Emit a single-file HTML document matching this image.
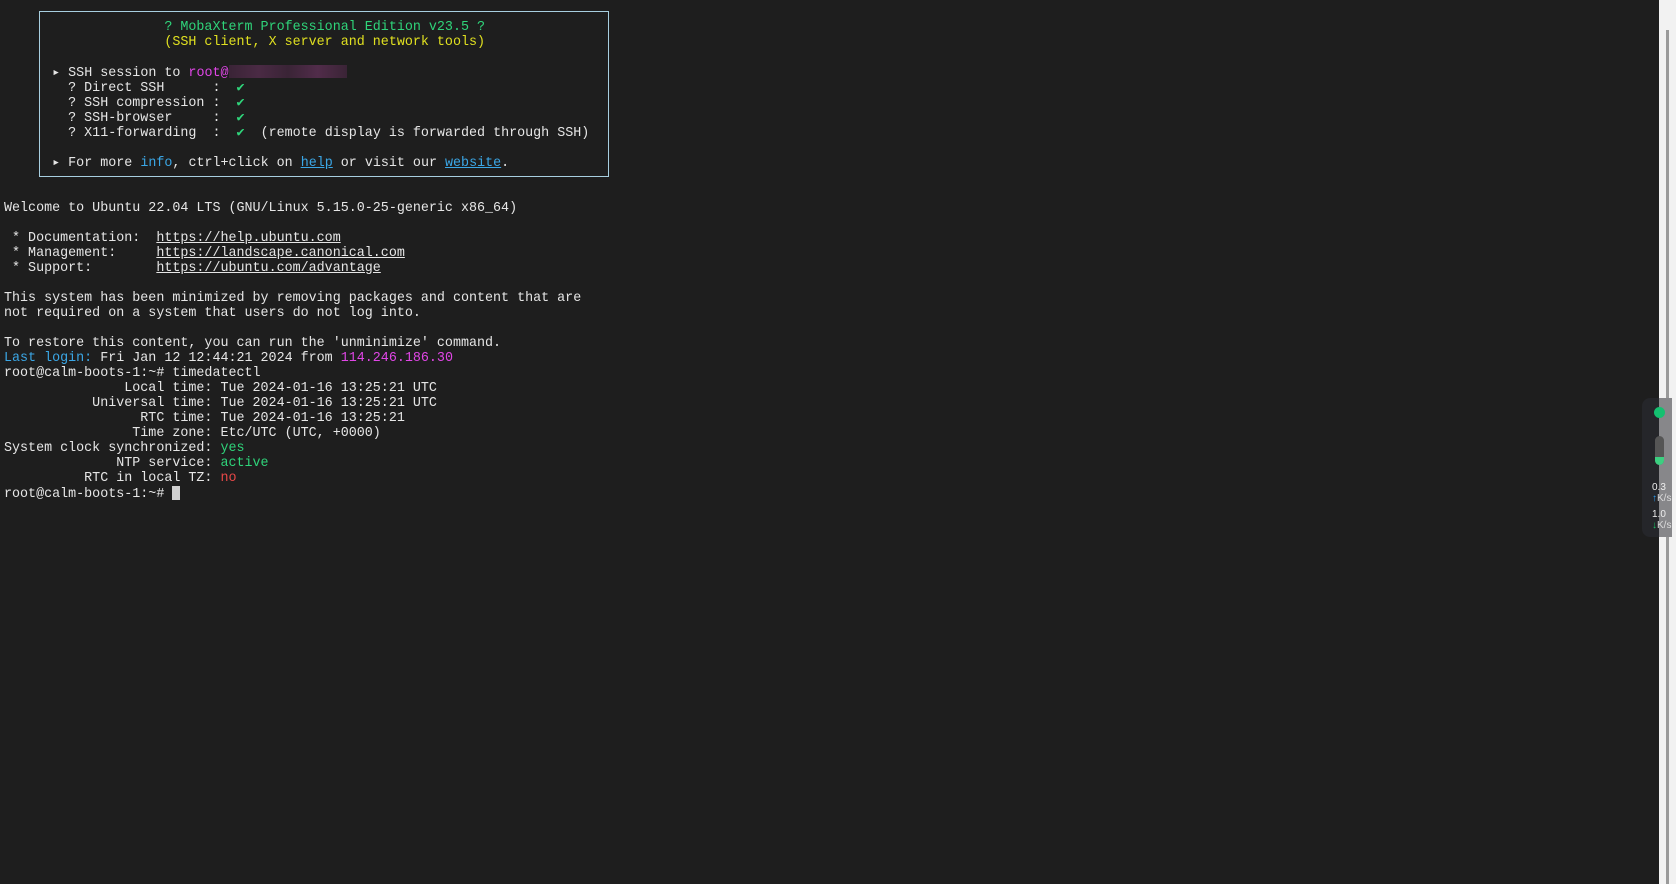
<!DOCTYPE html>
<html><head><meta charset="utf-8"><style>
html,body{margin:0;padding:0;background:#1e1e1e;width:1676px;height:884px;overflow:hidden;position:relative}
pre{position:absolute;left:4px;top:19.5px;margin:0;font-family:"Liberation Mono",monospace;font-size:13.36px;line-height:15px;color:#e6e6e6;white-space:pre}
.g{color:#2fd47a}.y{color:#e0e020}.m{color:#e046e6}.b{color:#3ba7e6}.u{text-decoration:underline}.r{color:#e84848}
.box{position:absolute;left:39px;top:11px;width:568px;height:164px;border:1px solid #a8cfe0}
.blur{display:inline-block;width:118px;height:13px;vertical-align:-2px;background:linear-gradient(90deg,#3a2436,#4a2a44,#3a2436,#512c4a,#3a2436)}
.cur{display:inline-block;width:8px;height:14px;background:#d0d0d0;vertical-align:-3px}
</style></head><body>
<div class="box"></div>
<pre>                    <span class="g">? MobaXterm Professional Edition v23.5 ?</span>
                    <span class="y">(SSH client, X server and network tools)</span>

      ▸ SSH session to <span class="m">root@</span><span class="blur"></span>
        ? Direct SSH      :  <span class="g">✔</span>
        ? SSH compression :  <span class="g">✔</span>
        ? SSH-browser     :  <span class="g">✔</span>
        ? X11-forwarding  :  <span class="g">✔</span>  (remote display is forwarded through SSH)

      ▸ For more <span class="b">info</span>, ctrl+click on <span class="b u">help</span> or visit our <span class="b u">website</span>.


Welcome to Ubuntu 22.04 LTS (GNU/Linux 5.15.0-25-generic x86_64)

 * Documentation:  <span class="u">https://help.ubuntu.com</span>
 * Management:     <span class="u">https://landscape.canonical.com</span>
 * Support:        <span class="u">https://ubuntu.com/advantage</span>

This system has been minimized by removing packages and content that are
not required on a system that users do not log into.

To restore this content, you can run the 'unminimize' command.
<span class="b">Last login:</span> Fri Jan 12 12:44:21 2024 from <span class="m">114.246.186.30</span>
root@calm-boots-1:~# timedatectl
               Local time: Tue 2024-01-16 13:25:21 UTC
           Universal time: Tue 2024-01-16 13:25:21 UTC
                 RTC time: Tue 2024-01-16 13:25:21
                Time zone: Etc/UTC (UTC, +0000)
System clock synchronized: <span class="g">yes</span>
              NTP service: <span class="g">active</span>
          RTC in local TZ: <span class="r">no</span>
root@calm-boots-1:~# <span class="cur"></span></pre>
<div style="position:absolute;left:1659px;top:0;width:17px;height:884px;background:#f2f2f2"></div>
<div style="position:absolute;left:1666px;top:30px;width:3px;height:854px;background:#9a9a9a"></div>
<div style="position:absolute;left:1642px;top:398px;width:30px;height:139px;background:#25262a;border-radius:8px 0 0 8px"></div>
<div style="position:absolute;left:1659px;top:398px;width:13px;height:139px;background:rgba(255,255,255,0.45)"></div>
<div style="position:absolute;left:1654px;top:407px;width:11px;height:11px;border-radius:50%;background:#14c070"></div>
<div style="position:absolute;left:1655px;top:436px;width:9px;height:29px;border-radius:5px;background:#555"></div>
<div style="position:absolute;left:1655px;top:457px;width:9px;height:8px;border-radius:0 0 5px 5px;background:#3ccf80"></div>
<div style="position:absolute;left:1652px;top:482px;font:10px 'Liberation Sans',sans-serif;color:#eee;line-height:11px">0.3<br><span style="color:#2a9df4">↑</span><span style="color:#ddd">K/s</span></div>
<div style="position:absolute;left:1652px;top:509px;font:10px 'Liberation Sans',sans-serif;color:#eee;line-height:11px">1.0<br><span style="color:#18c060">↓</span><span style="color:#ddd">K/s</span></div>
</body></html>
